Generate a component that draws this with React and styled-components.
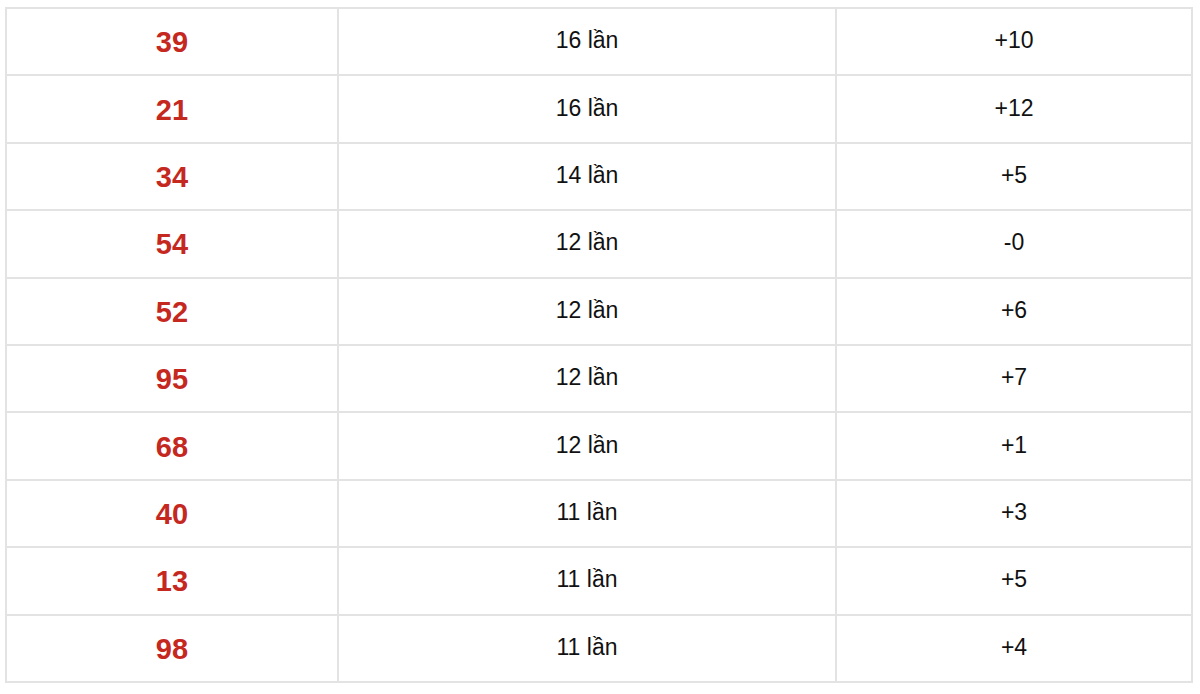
import React from "react";
import styled, { createGlobalStyle } from "styled-components";

const Global = createGlobalStyle`
  html, body { margin: 0; padding: 0; background: #fff; }
  body { font-family: "Liberation Sans", Arial, Helvetica, sans-serif; }
`;

const Wrap = styled.div`
  padding: 7px 8px 0 5px;
`;

const Table = styled.table`
  width: 1182px;
  border-collapse: collapse;
  border: 2px solid #e3e3e3;
  table-layout: fixed;
`;

const Row = styled.tr`
  height: 67.4px;
`;

const Cell = styled.td`
  border: 2px solid #e3e3e3;
  text-align: center;
  vertical-align: middle;
  padding: 0;
  width: ${(p) => p.$w}px;
  color: ${(p) => (p.$num ? "#c5281f" : "#111")};
  font-size: ${(p) => (p.$num ? "29px" : "23px")};
  font-weight: ${(p) => (p.$num ? 700 : 400)};
  line-height: 1;
  padding-top: ${(p) => (p.$num ? "2px" : "0")};
  padding-bottom: ${(p) => (p.$num ? "0" : "2px")};
`;

const rows = [
  ["39", "16 lần", "+10"],
  ["21", "16 lần", "+12"],
  ["34", "14 lần", "+5"],
  ["54", "12 lần", "-0"],
  ["52", "12 lần", "+6"],
  ["95", "12 lần", "+7"],
  ["68", "12 lần", "+1"],
  ["40", "11 lần", "+3"],
  ["13", "11 lần", "+5"],
  ["98", "11 lần", "+4"],
];

export default function App() {
  return (
    <>
      <Global />
      <Wrap>
        <Table>
          <tbody>
            {rows.map((r, i) => (
              <Row key={i}>
                <Cell $num $w={330}>{r[0]}</Cell>
                <Cell $w={496}>{r[1]}</Cell>
                <Cell $w={354}>{r[2]}</Cell>
              </Row>
            ))}
          </tbody>
        </Table>
      </Wrap>
    </>
  );
}
